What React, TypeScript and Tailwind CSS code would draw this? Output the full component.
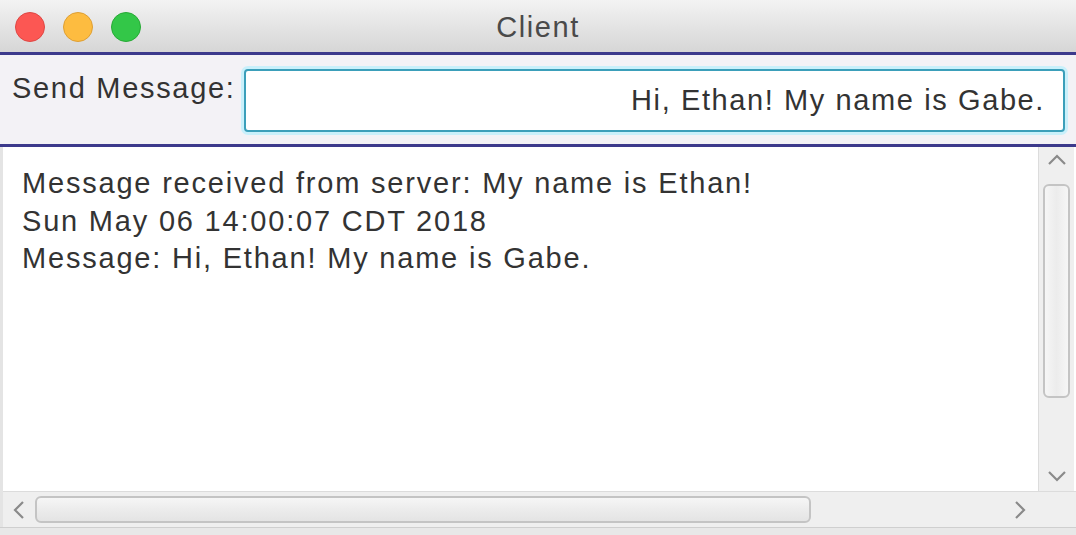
import React from "react";

export default function App() {
  const font = { fontFamily: '"Liberation Sans", Arial, sans-serif' };
  return (
    <div className="w-[1076px] h-[535px] overflow-hidden bg-[#ececec] flex flex-col text-[#333]" style={font}>
      {/* Title bar */}
      <div className="relative h-[52px] shrink-0 bg-gradient-to-b from-[#f3f3f3] to-[#d6d6d6] flex items-center justify-center pt-[3px]">
        <div className="absolute left-[15px] top-[12px] flex gap-[18px]">
          <div className="w-[30px] h-[30px] rounded-full bg-[#fc5753] border border-[#df4744]" />
          <div className="w-[30px] h-[30px] rounded-full bg-[#fdbc40] border border-[#de9f34]" />
          <div className="w-[30px] h-[30px] rounded-full bg-[#33c748] border border-[#27aa35]" />
        </div>
        <span className="text-[29px] tracking-[1.6px] text-[#4a4a4a] leading-none">Client</span>
      </div>
      <div className="h-[3px] shrink-0 bg-[#3c3a8c]" />
      {/* Toolbar */}
      <div className="h-[89px] shrink-0 bg-[#f3f2f6] flex items-start pl-[12px] pr-[11px] pt-[14px] gap-[8px]">
        <span className="text-[29px] tracking-[1.7px] leading-none mt-[5px] whitespace-nowrap">Send Message:</span>
        <div className="flex-1 h-[63px] rounded-[4px] border-2 border-[#3b9fba] bg-white shadow-[0_0_0_3px_#c9f0fb] flex items-center justify-end pr-[18px]">
          <span className="text-[29px] tracking-[1.6px] leading-none">Hi, Ethan! My name is Gabe.</span>
        </div>
      </div>
      <div className="h-[3px] shrink-0 bg-[#3c3a8c]" />
      {/* Text area with scrollbars */}
      <div className="flex-1 flex flex-col bg-white border-l-[3px] border-[#e4e4e4]">
        <div className="flex-1 flex min-h-0">
          <div className="flex-1 pl-[19px] pt-[18px] text-[29px] tracking-[1.8px] leading-[37.5px] whitespace-nowrap overflow-hidden">
            <div>Message received from server: My name is Ethan!</div>
            <div>Sun May 06 14:00:07 CDT 2018</div>
            <div>Message: Hi, Ethan! My name is Gabe.</div>
          </div>
          {/* Vertical scrollbar */}
          <div className="w-[36px] mr-[2px] bg-[#efefef] border-l border-[#dcdcdc] flex flex-col items-center pt-[6px] pb-[8px]">
            <svg width="22" height="14" viewBox="0 0 22 14" className="shrink-0">
              <path d="M3 11 L11 3 L19 11" fill="none" stroke="#8a8a8a" strokeWidth="2.2" />
            </svg>
            <div className="mt-[17px] w-[27px] h-[214px] rounded-[6px] border-2 border-[#c4c4c4] bg-gradient-to-r from-[#f6f6f6] via-[#ececec] to-[#f6f6f6]" />
            <div className="flex-1" />
            <svg width="22" height="14" viewBox="0 0 22 14" className="shrink-0">
              <path d="M3 3 L11 11 L19 3" fill="none" stroke="#8a8a8a" strokeWidth="2.2" />
            </svg>
          </div>
        </div>
        {/* Horizontal scrollbar */}
        <div className="h-[36px] shrink-0 bg-[#efefef] border-t border-[#dcdcdc] flex items-center">
          <div className="w-[32px] flex justify-center">
            <svg width="14" height="22" viewBox="0 0 14 22">
              <path d="M11 3 L3 11 L11 19" fill="none" stroke="#8a8a8a" strokeWidth="2.2" />
            </svg>
          </div>
          <div className="w-[776px] h-[27px] rounded-[6px] border-2 border-[#c4c4c4] bg-gradient-to-b from-[#f6f6f6] via-[#ececec] to-[#e4e4e4]" />
          <div className="flex-1" />
          <div className="w-[32px] mr-[40px] flex justify-center">
            <svg width="14" height="22" viewBox="0 0 14 22">
              <path d="M3 3 L11 11 L3 19" fill="none" stroke="#8a8a8a" strokeWidth="2.2" />
            </svg>
          </div>
        </div>
      </div>
      <div className="h-[8px] shrink-0 bg-[#e8e8e8] border-t border-[#cfcfcf]" />
    </div>
  );
}
